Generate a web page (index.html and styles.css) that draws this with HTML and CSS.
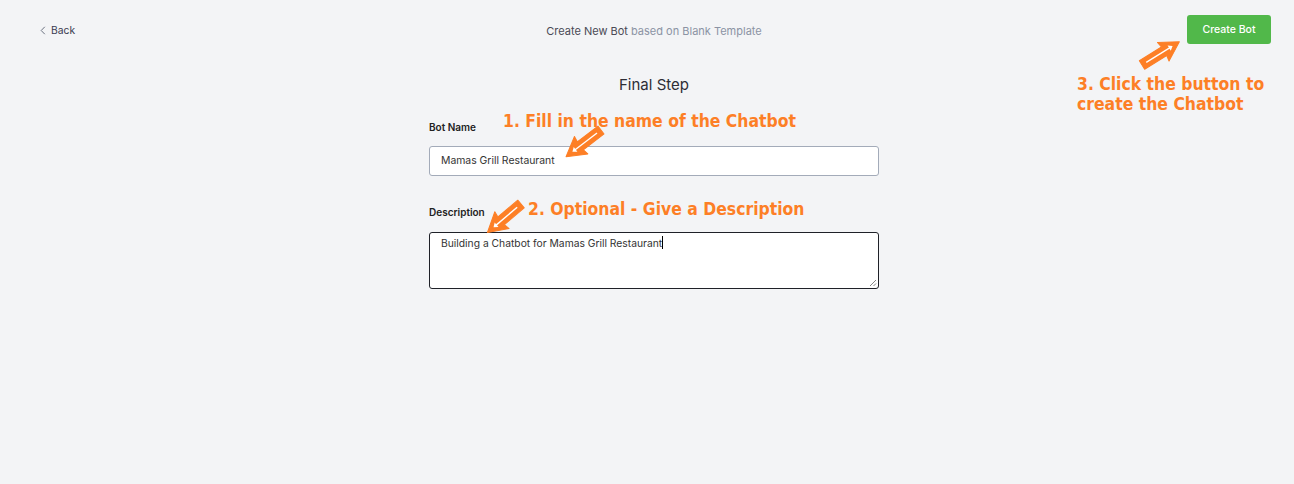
FILE: index.html
```html
<!DOCTYPE html>
<html>
<head>
<meta charset="utf-8">
<link rel="stylesheet" href="styles.css">
</head>
<body>
<div class="page">
  <header class="topbar">
    <a class="back">
      <svg class="chev" width="6" height="9" viewBox="0 0 6 9"><path d="M4.8 0.8 L1.2 4.5 L4.8 8.2" fill="none" stroke="#6b7280" stroke-width="1"/></svg>
      <span>Back</span>
    </a>
    <div class="title">Create New Bot <span class="sub">based on Blank Template</span></div>
    <div class="actions"><button class="create">Create Bot</button></div>
  </header>
  <main class="form">
    <h1 class="step">Final Step</h1>
    <label class="lbl lbl-name">Bot Name</label>
    <div class="input">Mamas Grill Restaurant</div>
    <label class="lbl lbl-desc">Description</label>
    <div class="textarea">Building a Chatbot for Mamas Grill Restaurant<span class="caret"></span>
      <svg class="grip" width="8" height="8" viewBox="0 0 8 8"><path d="M7 1 L1 7 M7 4.5 L4.5 7" stroke="#777" stroke-width="0.9"/></svg>
    </div>
  </main>

  <div class="note note1">1. Fill in the name of the Chatbot</div>
  <div class="note note2">2. Optional - Give a Description</div>
  <div class="note note3">3. Click the button to<br>create the Chatbot</div>

  <svg class="arrows" width="1294" height="484" viewBox="0 0 1294 484">
    <defs>
      <g id="arr">
        <path d="M0 -5 L26 -5 L25 -11 L44 0 L25 11 L26 5 L0 5 Z" fill="#fd7f26" stroke="#fd7f26" stroke-width="1" stroke-linejoin="round"/>
        <path d="M5 0 L33 0" stroke="#fff" stroke-width="1.4"/>
        <path d="M32 -3 L36 0 L32 3" fill="#fff"/>
      </g>
    </defs>
    <use href="#arr" transform="translate(601 130) rotate(142.6)"/>
    <use href="#arr" transform="translate(521 204) rotate(139.7)"/>
    <use href="#arr" transform="translate(1142 65) rotate(-31.9)"/>
  </svg>
</div>
</body>
</html>
```

FILE: styles.css
```css
html, body {
  margin: 0;
  padding: 0;
  background: #f3f4f6;
}
body {
  font-family: "Inter", "Open Sans", sans-serif;
  color: #333;
}
.page {
  position: relative;
  width: 1294px;
  height: 484px;
  overflow: hidden;
}
.topbar {
  display: grid;
  grid-template-columns: 1fr auto 1fr;
  align-items: center;
  padding: 15px 23px 0 40px;
  height: 29px;
}
.back {
  display: flex;
  align-items: center;
  gap: 5px;
  font-size: 10.3px;
  color: #3a3b50;
  justify-self: start;
  margin-top: 1px;
}
.chev { display: block; }
.title {
  font-size: 11px;
  color: #4a4a55;
  justify-self: center;
  margin-left: -3px;
  margin-top: 2px;
}
.sub { color: #8b93a4; }
.actions { justify-self: end; }
.create {
  width: 84px;
  height: 29px;
  border: none;
  border-radius: 3px;
  background: #51b84a;
  color: #fff;
  font-family: "Inter", "Open Sans", sans-serif;
  font-size: 10.5px;
  font-weight: 500;
  padding: 0;
}
.form {
  width: 450px;
  margin: 0 auto;
  padding-left: 14px;
  display: flex;
  flex-direction: column;
}
.step {
  margin: 31px 0 0;
  height: 20px;
  line-height: 20px;
  font-size: 15px;
  font-weight: 400;
  text-align: center;
  color: #2d2d35;
}
.lbl {
  display: block;
  font-size: 10px;
  font-weight: 600;
  line-height: 14px;
  color: #222;
}
.lbl-name { margin-top: 25px; }
.lbl-desc { margin-top: 29px; }
.input {
  margin-top: 12px;
  height: 28px;
  box-sizing: content-box;
  border: 1px solid #a3abb9;
  border-radius: 3px;
  background: #fff;
  font-size: 10.4px;
  line-height: 28px;
  padding: 0 11px;
  color: #333;
}
.textarea {
  position: relative;
  margin-top: 13px;
  padding: 3px 11px 0;
  height: 52px;
  border: 1.5px solid #1f2128;
  border-radius: 3px;
  background: #fff;
  font-size: 10.3px;
  line-height: 14px;
  color: #333;
  box-sizing: content-box;
}
.caret {
  display: inline-block;
  width: 1px;
  height: 13px;
  background: #000;
  vertical-align: -2px;
}
.grip {
  position: absolute;
  right: 1px;
  bottom: 1px;
}
.note {
  position: absolute;
  font-family: "DejaVu Sans Condensed", "DejaVu Sans", sans-serif;
  font-weight: bold;
  color: #fd7f26;
  font-size: 17.4px;
  line-height: 20px;
  white-space: nowrap;
}
.note1 { left: 503px; top: 111px; }
.note2 { left: 528px; top: 199px; }
.note3 { left: 1077px; top: 74px; }
.arrows {
  position: absolute;
  left: 0;
  top: 0;
  pointer-events: none;
}
```
